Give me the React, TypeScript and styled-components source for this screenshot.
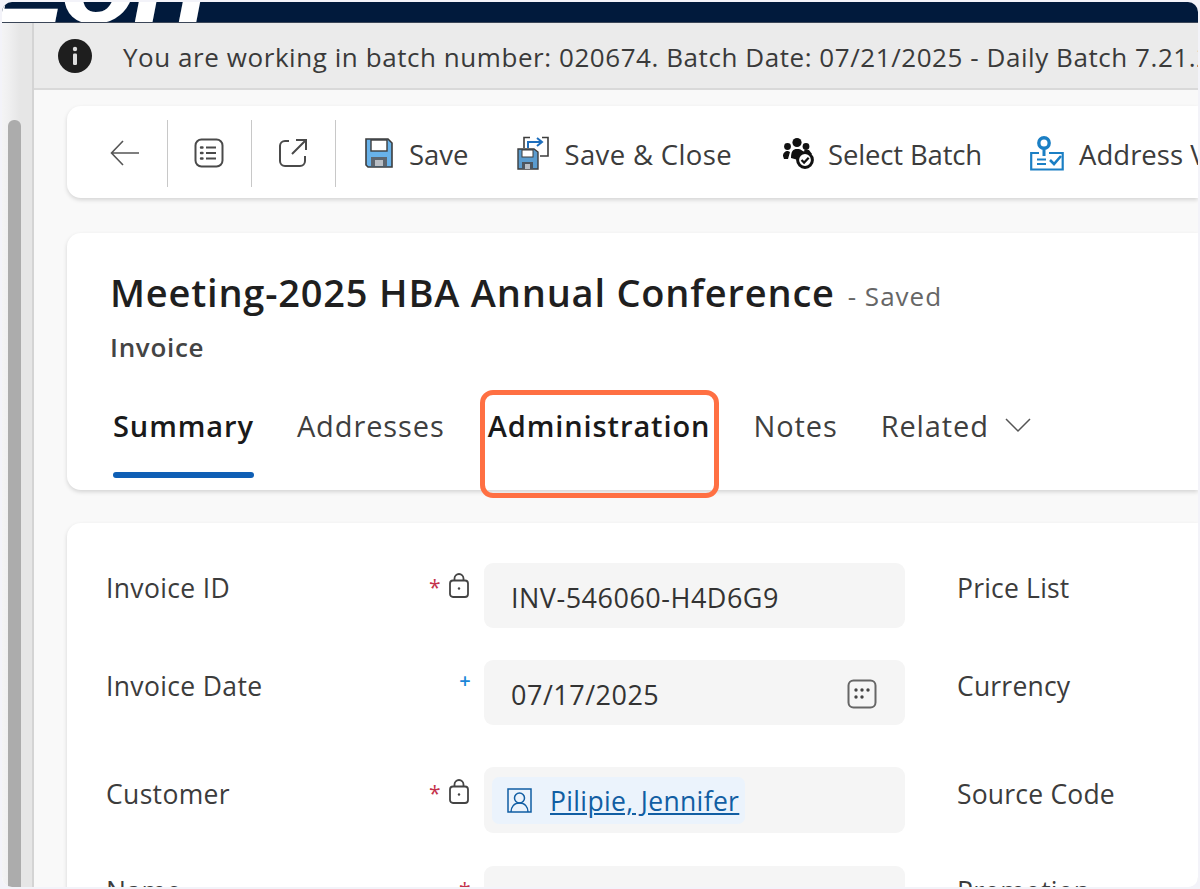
import React from "react";
import styled, { createGlobalStyle } from "styled-components";

const FONT = `"Open Sans", "Noto Sans", "Liberation Sans", sans-serif`;

const GlobalStyle = createGlobalStyle`
  html, body {
    margin: 0;
    padding: 0;
    background: #f3f3f9;
    font-family: ${FONT};
  }
  * {
    box-sizing: border-box;
  }
  svg {
    flex-shrink: 0;
  }
`;

const Frame = styled.div`
  background: #fff;
  border-radius: 10px;
  display: flex;
  flex-direction: column;
  height: 885px;
  margin: 2px;
  overflow: hidden;
  width: 1196px;
`;

const TopBand = styled.header`
  background: #011a3c;
  border-bottom: 1px solid #3b4658;
  flex: 0 0 21px;
  overflow: hidden;
  position: relative;
`;

const Logo = styled.span`
  color: #fff;
  font-family: "Liberation Sans", sans-serif;
  font-size: 128px;
  font-style: italic;
  font-weight: 700;
  left: -21px;
  letter-spacing: -6px;
  line-height: 1;
  position: absolute;
  top: -87px;
`;

const Body = styled.div`
  display: flex;
  flex: 1;
  min-height: 0;
`;

const Rail = styled.aside`
  background: linear-gradient(90deg, #f4f4f5 0, #f0f0f1 6px, #e6e6e6 18px, #e6e6e6 100%);
  border-right: 2px solid #d4d4d4;
  flex: 0 0 32px;
  padding: 97px 0 0 6px;
`;

const ScrollThumb = styled.div`
  background: #acacac;
  border-radius: 6px 6px 0 0;
  height: 100%;
  width: 13px;
`;

const Main = styled.main`
  background: #f9f9f9;
  display: flex;
  flex: 1;
  flex-direction: column;
  min-width: 0;
`;

const Notice = styled.div`
  align-items: center;
  background: #ebebeb;
  border-bottom: 2px solid #d9d9d9;
  color: #3a3a3a;
  display: flex;
  flex: 0 0 67px;
  font-size: 26px;
  gap: 31px;
  overflow: hidden;
  padding-left: 24px;
  white-space: nowrap;
`;

const NoticeText = styled.span`
  letter-spacing: 0.56px;
  margin-top: 2px;
`;

const Content = styled.div`
  flex: 1;
  min-height: 0;
  overflow: hidden;
  padding: 16px 0 0 33px;
`;

const Card = styled.section`
  background: #fff;
  border-radius: 14px 0 0 14px;
  box-shadow: 0 2px 4px rgba(0, 0, 0, 0.15);
`;

const Toolbar = styled(Card)`
  align-items: center;
  display: flex;
  height: 92px;
  overflow: hidden;
  padding: 2px 0 0 17px;
  white-space: nowrap;
`;

const ToolCell = styled.div`
  align-items: center;
  border-right: 1px solid #c8c8c8;
  display: flex;
  flex: 0 0 84px;
  height: 67px;
  justify-content: center;
  padding-right: 2px;
`;

const Actions = styled.div`
  align-items: center;
  display: flex;
  gap: 48px;
  padding-left: 29px;
`;

const Action = styled.div<{ $gap: number; $after?: number }>`
  align-items: center;
  color: #3c3c3c;
  display: flex;
  font-size: 27.5px;
  gap: ${props => props.$gap}px;
  margin-right: ${props => props.$after || 0}px;
`;

const ActionLabel = styled.span<{ $spacing?: number }>`
  letter-spacing: ${props => props.$spacing || 0}px;
  margin-top: 3px;
`;

const HeaderCard = styled(Card)`
  height: 257px;
  margin-top: 35px;
  padding: 35px 0 0 43px;
`;

const TitleRow = styled.div`
  align-items: center;
  display: flex;
  gap: 13px;
  height: 48px;
`;

const Title = styled.h1`
  color: #1f1f1f;
  font-size: 38px;
  font-weight: 600;
  letter-spacing: 0.8px;
  line-height: 48px;
  margin: 0;
`;

const SavedTag = styled.span`
  color: #666;
  font-size: 26px;
  letter-spacing: 1px;
  margin-top: 8px;
`;

const EntityName = styled.div`
  color: #444;
  font-size: 26px;
  font-weight: 600;
  letter-spacing: 0.7px;
  line-height: 30px;
  margin-top: 16px;
`;

const Tabs = styled.nav`
  display: flex;
  gap: 43px;
  margin-top: 46px;
  padding-left: 3px;
`;

const Tab = styled.div<{ $active?: boolean; $strong?: boolean }>`
  align-items: flex-start;
  color: ${props => (props.$active || props.$strong ? "#1a1a1a" : "#3f3f3f")};
  display: flex;
  font-size: 29px;
  font-weight: ${props => (props.$active || props.$strong ? 600 : 400)};
  gap: 16px;
  height: 70px;
  letter-spacing: 0.9px;
  line-height: 36px;
  position: relative;

  ${props =>
    props.$active &&
    `&::after {
      background: #0f5fb5;
      border-radius: 3px;
      bottom: 0;
      content: "";
      height: 6px;
      left: 0;
      position: absolute;
      right: 0;
    }`}
`;

const Highlight = styled.div`
  border: 5px solid #ff7043;
  border-radius: 13px;
  bottom: -20px;
  left: -8px;
  pointer-events: none;
  position: absolute;
  right: -9px;
  top: -18px;
`;

const FormCard = styled(Card)`
  border-radius: 14px 0 0 0;
  height: 420px;
  margin-top: 33px;
  padding: 40px 0 0 39px;
`;

const FieldRow = styled.div<{ $gap: number }>`
  display: grid;
  grid-template-columns: 378px 421px 1fr;
  margin-bottom: ${props => props.$gap}px;
`;

const LabelCell = styled.div<{ $top: number }>`
  color: #3c3c3c;
  display: flex;
  font-size: 26.5px;
  justify-content: space-between;
  letter-spacing: 0.35px;
  line-height: 30px;
  padding: ${props => props.$top}px 15px 0 0;
`;

const Marks = styled.div`
  align-items: flex-start;
  display: flex;
  gap: 8px;
`;

const Mark = styled.span<{ $blue?: boolean; $solo?: boolean }>`
  color: ${props => (props.$blue ? "#1a86d8" : "#c4314b")};
  font-size: ${props => (props.$blue ? 20 : 21)}px;
  font-weight: ${props => (props.$blue ? 600 : 400)};
  line-height: ${props => (props.$blue ? 16 : 24)}px;
  margin-right: ${props => (props.$solo ? -2 : 0)}px;
  margin-top: 2px;
`;

const Input = styled.div<{ $height: number }>`
  align-items: center;
  background: #f5f5f5;
  border-radius: 9px;
  color: #333;
  display: flex;
  font-size: 27px;
  height: ${props => props.$height}px;
  justify-content: space-between;
  letter-spacing: 0.5px;
  padding: 3px 28px 0 27px;
`;

const LookupInput = styled(Input)`
  padding: 0 0 0 8px;
`;

const Chip = styled.div`
  align-items: center;
  background: #ebf3fc;
  border-radius: 7px;
  display: flex;
  gap: 18px;
  height: 47px;
  padding: 1px 6px 0 15px;
`;

const CustomerLink = styled.a`
  color: #115ea3;
  font-size: 26.5px;
  letter-spacing: 0.35px;
  text-decoration: underline;
`;

const RightLabel = styled.div<{ $top: number }>`
  color: #3c3c3c;
  font-size: 26.5px;
  letter-spacing: 0.2px;
  line-height: 30px;
  padding: ${props => props.$top}px 0 0 52px;
`;

const ChevronSvg = styled.svg`
  margin-top: 9px;
`;

const Arrow = () => (
  <svg width="30" height="26" viewBox="0 0 30 26" fill="none" stroke="#555" strokeWidth="1.6">
    <path d="M29 13H2M13 1L1.5 13 13 25" />
  </svg>
);

const ListIcon = () => (
  <svg width="30" height="30" viewBox="0 0 30 30" fill="none" stroke="#4a4a4a" strokeWidth="2">
    <rect x="1.5" y="1.5" width="27" height="27" rx="6" />
    <path d="M12 9.5h10M12 15h10M12 20.5h10" />
    <path d="M7 9.5h1.5M7 15h1.5M7 20.5h1.5" strokeLinecap="round" strokeWidth="2.4" />
  </svg>
);

const OpenIcon = () => (
  <svg width="30" height="30" viewBox="0 0 30 30" fill="none" stroke="#4a4a4a" strokeWidth="2">
    <path d="M11 3H7a5 5 0 0 0-5 5v15a5 5 0 0 0 5 5h15a5 5 0 0 0 5-5v-5" />
    <path d="M14 16L27 3M18 2h10v10" />
  </svg>
);

const SaveIcon = () => (
  <svg width="28" height="30" viewBox="0 0 28 30">
    <path d="M1 1h22l4 4v24H3l-2-2z" fill="#68b2ea" stroke="#3d3d3d" strokeWidth="1.6" />
    <rect x="6" y="2" width="16" height="11" fill="#fff" stroke="#3d3d3d" strokeWidth="1.4" />
    <path d="M6 28V19h16v9z" fill="#5d6670" />
    <rect x="10" y="22" width="8" height="6" fill="#b9bec4" />
  </svg>
);

const SaveCloseIcon = () => (
  <svg width="32" height="34" viewBox="0 0 32 34" fill="none">
    <path d="M7 12V1.5h6M25 1.5h6V20h-8" stroke="#3d3d3d" strokeWidth="1.6" />
    <path d="M11 12V6h13" stroke="#1f6fbd" strokeWidth="2" />
    <path d="M20 2l5 4-5 4" stroke="#1f6fbd" strokeWidth="2" />
    <path d="M1 13h16l4 3v17H1z" fill="#5a9ccf" stroke="#3d3d3d" strokeWidth="1.4" />
    <rect x="5" y="14" width="11" height="7" fill="#fff" stroke="#3d3d3d" />
    <rect x="5" y="26" width="11" height="7" fill="#4c5660" />
    <rect x="8" y="28" width="5" height="5" fill="#b9bec4" />
  </svg>
);

const BatchIcon = () => (
  <svg width="33" height="32" viewBox="0 0 33 32">
    <circle cx="14" cy="5.5" r="4.6" fill="#111" />
    <circle cx="4.5" cy="9.5" r="3.4" fill="#111" />
    <circle cx="23" cy="9.5" r="3.4" fill="#111" />
    <path d="M8 21c0-7 2-9 6-9s7 2 7 5l-6 6zM0 19c0-3 2-5 5-5l2 1-2 7H1zM21 13h5l3 4-5 1z" fill="#111" />
    <circle cx="22" cy="23" r="7.4" fill="#fff" stroke="#111" strokeWidth="3" />
    <path d="M18.5 23l2.6 2.6 4.6-4.8" fill="none" stroke="#111" strokeWidth="2.2" />
  </svg>
);

const AddressIcon = () => (
  <svg width="34" height="35" viewBox="0 0 34 35" fill="none" stroke="#1b7fc4" strokeWidth="2.2">
    <circle cx="14" cy="7" r="5.2" strokeWidth="3.4" />
    <path d="M14 12v8" strokeWidth="3" />
    <path d="M9 17H1.2v16.5h31.5V17H19" />
    <path d="M7 23.5h9M7 28h9" strokeWidth="2" />
    <path d="M20 24l4 4 7-8" strokeWidth="2.6" />
  </svg>
);

const InfoIcon = () => (
  <svg width="34" height="34" viewBox="0 0 34 34">
    <circle cx="17" cy="17" r="17" fill="#1e1e1e" />
    <circle cx="17" cy="10" r="2.2" fill="#ddd" />
    <rect x="15" y="14.5" width="4" height="11.5" rx="1.2" fill="#ddd" />
  </svg>
);

const LockIcon = () => (
  <svg width="20" height="25" viewBox="0 0 20 25" fill="none" stroke="#444" strokeWidth="1.8">
    <rect x="1" y="7.5" width="18" height="16.5" rx="3" />
    <path d="M5.5 7.5V5.5a4.5 4.5 0 0 1 9 0v2" />
    <circle cx="10" cy="15.5" r="1.2" fill="#444" stroke="none" />
  </svg>
);

const CalendarIcon = () => (
  <svg width="30" height="30" viewBox="0 0 30 30" fill="none" stroke="#666" strokeWidth="2">
    <rect x="1.5" y="1.5" width="27" height="27" rx="5" />
    <g fill="#444" stroke="none">
      <circle cx="9" cy="11" r="1.7" />
      <circle cx="15" cy="11" r="1.7" />
      <circle cx="21" cy="11" r="1.7" />
      <circle cx="9" cy="18" r="1.7" />
      <circle cx="15" cy="18" r="1.7" />
    </g>
  </svg>
);

const ContactIcon = () => (
  <svg width="25" height="25" viewBox="0 0 25 25" fill="none" stroke="#115ea3" strokeWidth="1.5">
    <rect x="1" y="1" width="23" height="23" />
    <circle cx="12.5" cy="10" r="5" />
    <path d="M4 24c0-5 3-9 8.5-9S21 19 21 24" />
  </svg>
);

const Chevron = () => (
  <ChevronSvg width="26" height="16" viewBox="0 0 26 16" fill="none" stroke="#555" strokeWidth="1.5">
    <path d="M1 2l12 12L25 2" />
  </ChevronSvg>
);

export default function App() {
  return (
    <>
      <GlobalStyle />
      <Frame>
        <TopBand>
          <Logo>Eon</Logo>
        </TopBand>
        <Body>
          <Rail>
            <ScrollThumb />
          </Rail>
          <Main>
            <Notice>
              <InfoIcon />
              <NoticeText>You are working in batch number: 020674. Batch Date: 07/21/2025 - Daily Batch 7.21.2025</NoticeText>
            </Notice>
            <Content>
              <Toolbar>
                <ToolCell><Arrow /></ToolCell>
                <ToolCell><ListIcon /></ToolCell>
                <ToolCell><OpenIcon /></ToolCell>
                <Actions>
                  <Action $gap={16}><SaveIcon /><ActionLabel>Save</ActionLabel></Action>
                  <Action $gap={16} $after={3}><SaveCloseIcon /><ActionLabel $spacing={0.35}>Save &amp; Close</ActionLabel></Action>
                  <Action $gap={12}><BatchIcon /><ActionLabel $spacing={-0.15}>Select Batch</ActionLabel></Action>
                  <Action $gap={15}><AddressIcon /><ActionLabel>Address Validation</ActionLabel></Action>
                </Actions>
              </Toolbar>
              <HeaderCard>
                <TitleRow>
                  <Title>Meeting-2025 HBA Annual Conference</Title>
                  <SavedTag>- Saved</SavedTag>
                </TitleRow>
                <EntityName>Invoice</EntityName>
                <Tabs>
                  <Tab $active>Summary</Tab>
                  <Tab>Addresses</Tab>
                  <Tab $strong>
                    Administration
                    <Highlight />
                  </Tab>
                  <Tab>Notes</Tab>
                  <Tab>Related<Chevron /></Tab>
                </Tabs>
              </HeaderCard>
              <FormCard>
                <FieldRow $gap={32}>
                  <LabelCell $top={10}>
                    Invoice ID
                    <Marks><Mark>*</Mark><LockIcon /></Marks>
                  </LabelCell>
                  <Input $height={65}>INV-546060-H4D6G9</Input>
                  <RightLabel $top={10}>Price List</RightLabel>
                </FieldRow>
                <FieldRow $gap={42}>
                  <LabelCell $top={11}>
                    Invoice Date
                    <Marks><Mark $blue $solo>+</Mark></Marks>
                  </LabelCell>
                  <Input $height={65}>07/17/2025<CalendarIcon /></Input>
                  <RightLabel $top={11}>Currency</RightLabel>
                </FieldRow>
                <FieldRow $gap={33}>
                  <LabelCell $top={12}>
                    Customer
                    <Marks><Mark>*</Mark><LockIcon /></Marks>
                  </LabelCell>
                  <LookupInput $height={66}>
                    <Chip>
                      <ContactIcon />
                      <CustomerLink>Pilipie, Jennifer</CustomerLink>
                    </Chip>
                  </LookupInput>
                  <RightLabel $top={12}>Source Code</RightLabel>
                </FieldRow>
                <FieldRow $gap={0}>
                  <LabelCell $top={10}>
                    Name
                    <Marks><Mark $solo>*</Mark></Marks>
                  </LabelCell>
                  <Input $height={65} />
                  <RightLabel $top={10}>Promotion</RightLabel>
                </FieldRow>
              </FormCard>
            </Content>
          </Main>
        </Body>
      </Frame>
    </>
  );
}
